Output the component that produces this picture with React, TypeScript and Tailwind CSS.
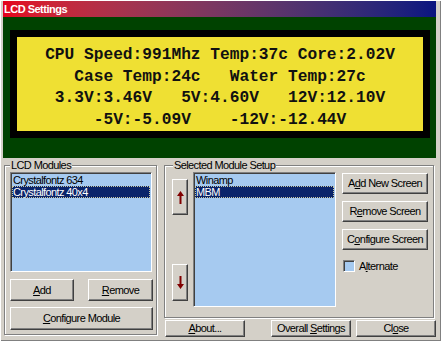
import React from "react";

const ui = "font-['Liberation_Sans',Arial,sans-serif] text-[11px] tracking-[-0.6px] text-black";
const raised =
  "border border-t-white border-l-white border-r-[#404040] border-b-[#404040] shadow-[inset_-1px_-1px_0_#808080]";
const sunken =
  "border border-t-[#808080] border-l-[#808080] border-r-white border-b-white shadow-[inset_1px_1px_0_#404040]";
const etched = "relative border border-[#808080] shadow-[inset_1px_1px_0_#ffffff,1px_1px_0_#ffffff]";

const lcdLines = [
  "CPU Speed:991Mhz Temp:37c Core:2.02V",
  "Case Temp:24c   Water Temp:27c",
  "3.3V:3.46V   5V:4.60V   12V:12.10V",
  "-5V:-5.09V    -12V:-12.44V",
];

function Btn({ children, className = "" }: { children: React.ReactNode; className?: string }) {
  return (
    <div className={`${raised} ${ui} flex items-center justify-center bg-[#d4d0c8] ${className}`}>
      <span>{children}</span>
    </div>
  );
}

function U({ children }: { children: React.ReactNode }) {
  return <span className="underline underline-offset-[1px]">{children}</span>;
}

function Arrow({ down = false }: { down?: boolean }) {
  return (
    <svg width="7" height="13" viewBox="0 0 7 13" className={down ? "rotate-180" : ""}>
      <path d="M3.5 0 L7 5 H4.5 V13 H2.5 V5 H0 Z" fill="#800000" />
    </svg>
  );
}

function ListBox({ items, selected, className = "" }: { items: string[]; selected: number; className?: string }) {
  return (
    <div className={`${sunken} ${ui} bg-[#a6caf0] p-[1px] ${className}`}>
      {items.map((item, i) => (
        <div
          key={item}
          className={
            i === selected
              ? "h-[12px] leading-[12px] pl-[1px] bg-[#0a246a] text-white outline-dotted outline-1 -outline-offset-1 outline-[#c8c8a0]"
              : "h-[12px] leading-[12px] pl-[1px]"
          }
        >
          {item}
        </div>
      ))}
    </div>
  );
}

export default function App() {
  return (
    <div className="w-[441px] h-[341px] bg-[#d4d0c8] flex flex-col pt-[1px] pl-[3px] pr-[5px] overflow-hidden shadow-[inset_1px_1px_0_#ffffff,inset_-1px_-1px_0_#808080]">
      {/* Title bar */}
      <div className="h-[16px] flex items-center pl-[1px] bg-gradient-to-r from-[#e4001c] to-[#0a1480]">
        <span className="font-['Liberation_Sans',Arial,sans-serif] text-[11px] font-bold tracking-[-0.5px] text-white">
          LCD Settings
        </span>
      </div>

      {/* LCD preview */}
      <div className="h-[141px] bg-[#004200] pt-[13px] pl-[7px] pr-[6px]">
        <div className="border-[7px] border-black bg-[#efe033] h-[108px] pt-[8px]">
          {lcdLines.map((line) => (
            <div
              key={line}
              className="whitespace-pre text-center font-['Courier_New','Nimbus_Mono_PS','FreeMono','Liberation_Mono',monospace] font-bold text-[16.2px] leading-[21.6px] text-[#111]"
            >
              {line}
            </div>
          ))}
        </div>
      </div>

      {/* Settings area */}
      <div className="flex items-start">
        {/* LCD Modules */}
        <div className={`${etched} ml-[1px] mt-[7px] w-[154px] h-[170px] pl-[5px] pt-[6px]`}>
          <span className={`${ui} absolute -top-[7px] left-[5px] px-[1px] bg-[#d4d0c8] leading-[13px]`}>LCD Modules</span>
          <ListBox items={["Crystalfontz 634", "Crystalfontz 40x4"]} selected={1} className="w-[142px] h-[100px]" />
          <div className="flex mt-[7px]">
            <Btn className="w-[64px] h-[22px]">
              <U>A</U>dd
            </Btn>
            <Btn className="w-[65px] h-[22px] ml-[14px]">
              <U>R</U>emove
            </Btn>
          </div>
          <Btn className="w-[143px] h-[23px] mt-[6px]">
            <U>C</U>onfigure Module
          </Btn>
        </div>

        {/* Selected Module Setup */}
        <div className="ml-[7px] mt-[7px] flex flex-col">
          <div className={`${etched} w-[270px] h-[153px] flex items-start pl-[7px]`}>
            <span className={`${ui} absolute -top-[7px] left-[8px] px-[1px] bg-[#d4d0c8] leading-[13px]`}>
              Selected Module Setup
            </span>
            <div className="mt-[13px] h-[122px] w-[16px] flex flex-col justify-between">
              <Btn className="h-[36px]">
                <Arrow />
              </Btn>
              <Btn className="h-[37px]">
                <Arrow down />
              </Btn>
            </div>
            <ListBox items={["Winamp", "MBM"]} selected={1} className="ml-[5px] mt-[6px] w-[143px] h-[135px]" />
            <div className="ml-[6px] mt-[7px] w-[86px] flex flex-col gap-[7px]">
              <Btn className="h-[21px]">
                A<U>d</U>d New Screen
              </Btn>
              <Btn className="h-[21px]">
                R<U>e</U>move Screen
              </Btn>
              <Btn className="h-[21px]">
                C<U>o</U>nfigure Screen
              </Btn>
              <div className="flex items-center mt-[1px]">
                <div className={`${sunken} ml-[1px] w-[12px] h-[12px] bg-[#a6caf0]`} />
                <span className={`${ui} ml-[4px]`}>
                  A<U>l</U>ternate
                </span>
              </div>
            </div>
          </div>
          <div className="flex mt-[2px] ml-[1px]">
            <Btn className="w-[80px] h-[17px]">
              <U>A</U>bout...
            </Btn>
            <Btn className="w-[80px] h-[17px] ml-[26px]">
              Overall <U>S</U>ettings
            </Btn>
            <Btn className="w-[80px] h-[17px] ml-[5px]">
              Cl<U>o</U>se
            </Btn>
          </div>
        </div>
      </div>
    </div>
  );
}
